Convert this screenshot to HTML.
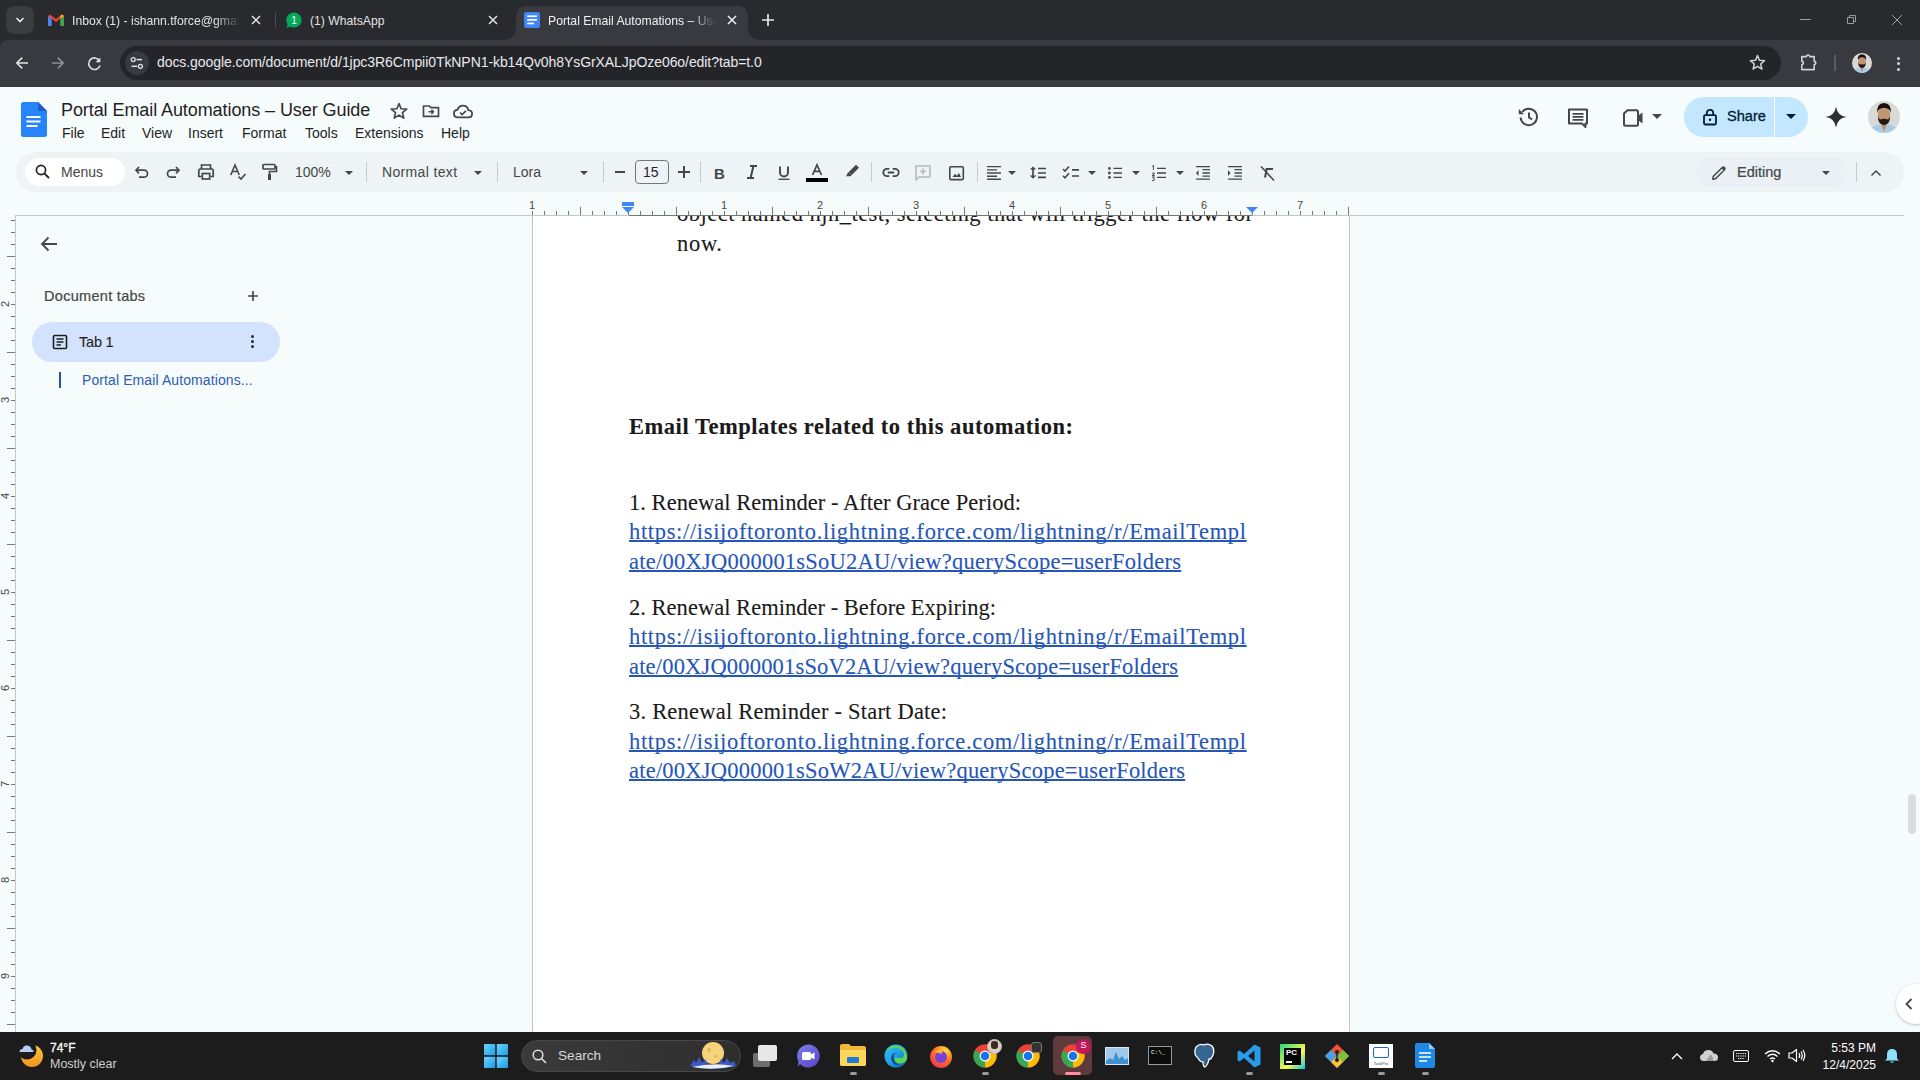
<!DOCTYPE html>
<html><head><meta charset="utf-8">
<style>
*{margin:0;padding:0;box-sizing:border-box}
html,body{width:1920px;height:1080px;overflow:hidden;background:#f6fbfc;font-family:"Liberation Sans",sans-serif;position:relative}
.abs{position:absolute}
svg{position:absolute;overflow:visible}
/* chrome */
#tabstrip{left:0;top:0;width:1920px;height:50px;background:#282a2e}
#toolbar{left:0;top:40px;width:1920px;height:47px;background:#383a3f;border-top-left-radius:8px}
#omni{left:120px;top:46px;width:1661px;height:34px;border-radius:17px;background:#232529}
.tabtxt{font-size:12.2px;color:#e3e3e3;white-space:nowrap;top:14px}
/* docs */
#tb{left:16px;top:152px;width:1888px;height:40px;border-radius:20px;background:#eef3f6}
.menu{font-size:14px;color:#1f1f1f;top:125px}
.ic{stroke:#444746;fill:none;stroke-width:2}
.tbt{font-size:14px;color:#444746;top:164px}
.sep{position:absolute;top:162px;width:1px;height:20px;background:#c7c7c7}
#page{left:532px;top:215px;width:817px;height:830px;background:#fff;border-left:1px solid #c7c7c7;border-right:1px solid #c7c7c7}
.doc{font-family:"Liberation Serif",serif;font-size:22.5px;line-height:30px;color:#1a1a1a;-webkit-text-stroke:0.1px currentColor;white-space:nowrap;position:absolute}
.lnk{color:#2556b8;text-decoration:underline;text-decoration-thickness:2px;text-underline-offset:1px;text-decoration-skip-ink:none}
.rnum{position:absolute;width:20px;text-align:center;font-size:11px;color:#444746}
.vnum{transform:rotate(-90deg)}
#taskbar{left:0;top:1032px;width:1920px;height:48px;background:#1c1c1c}
</style></head><body>
<svg width="0" height="0" style="position:absolute"><defs><symbol id="av" viewBox="0 0 32 32"><clipPath id="avc"><circle cx="16" cy="16" r="16"/></clipPath><g clip-path="url(#avc)"><rect width="32" height="32" fill="#d9d9d7"/><path d="M3 27 Q9 23 13 23.5 L16 32 L19 23.5 Q23 23 29 27 V32 H3Z" fill="#a8cce6"/><path d="M12.5 21 H19.5 L16 31Z" fill="#b88b69"/><ellipse cx="16" cy="14" rx="6.2" ry="8.3" fill="#c29572"/><path d="M9.3 12 Q8.5 2 16 2 Q23.5 2 22.7 12 Q21.8 7 16 6.8 Q10.2 7 9.3 12Z" fill="#17120f"/><path d="M9.8 14.5 Q10 23.8 16 24 Q22 23.8 22.2 14.5 Q21 19 19 18.3 Q16 17.3 13 18.3 Q11 19 9.8 14.5Z" fill="#201813"/></g></symbol></defs></svg>
<!-- TAB STRIP -->
<div id="tabstrip" class="abs"></div>
<div class="abs" style="left:6px;top:6px;width:28px;height:28px;border-radius:8px;background:#3b3c3e"></div>
<svg style="left:14px;top:14px" width="12" height="12"><path d="M2.5 4 L6 7.5 L9.5 4" stroke="#e8eaed" stroke-width="1.6" fill="none"/></svg>
<!-- gmail tab -->
<svg style="left:48px;top:14px" width="16" height="12" viewBox="0 0 16 12"><path d="M0 2 V12 H3.5 V4.5 L8 8 L12.5 4.5 V12 H16 V2 L14 0.6 L8 5 L2 0.6 Z" fill="#ea4335"/><path d="M0 2 V12 H3.5 V4.5 L0 2Z" fill="#4285f4"/><path d="M16 2 V12 H12.5 V4.5Z" fill="#34a853"/><path d="M12.5 4.5 L16 2 L14 0.6 L12.5 1.7Z" fill="#fbbc04"/></svg>
<div class="abs tabtxt" style="left:72px;width:168px;overflow:hidden;-webkit-mask-image:linear-gradient(90deg,#000 85%,transparent);color:#e3e3e3">Inbox (1) - ishann.tforce@gmail.com</div>
<svg style="left:251px;top:15px" width="10" height="10"><path d="M1 1 L9 9 M9 1 L1 9" stroke="#e3e3e3" stroke-width="1.5"/></svg>
<div class="abs" style="left:275px;top:12px;width:1px;height:16px;background:#4a4c50"></div>
<!-- whatsapp tab -->
<svg style="left:286px;top:12px" width="16" height="17" viewBox="0 0 16 17"><path d="M8 0.5 A7.5 7.5 0 1 1 4.6 14.6 L0.5 16 L1.6 12.2 A7.5 7.5 0 0 1 8 0.5Z" fill="#00a859"/><text x="8" y="12" font-size="10" font-family="Liberation Sans" fill="#fff" text-anchor="middle">1</text></svg>
<div class="abs tabtxt" style="left:310px;color:#e3e3e3">(1) WhatsApp</div>
<svg style="left:488px;top:15px" width="10" height="10"><path d="M1 1 L9 9 M9 1 L1 9" stroke="#e3e3e3" stroke-width="1.5"/></svg>
<!-- active tab -->
<svg style="left:502px;top:6px" width="262" height="34" viewBox="0 0 262 34"><path d="M0 34 Q14 34 14 20 V10 Q14 0 24 0 H236 Q246 0 246 10 V20 Q246 34 260 34 Z" fill="#383a3f"/></svg>
<svg style="left:524px;top:12px" width="16" height="16" viewBox="0 0 16 16"><rect x="0" y="0" width="16" height="16" rx="2.2" fill="#4285f4"/><rect x="3.2" y="3.4" width="9.8" height="1.7" fill="#fff"/><rect x="3.2" y="7" width="9.8" height="1.7" fill="#fff"/><rect x="3.2" y="10.6" width="6.8" height="1.7" fill="#fff"/></svg>
<div class="abs tabtxt" style="left:548px;width:168px;overflow:hidden;-webkit-mask-image:linear-gradient(90deg,#000 85%,transparent);color:#f2f2f2">Portal Email Automations – User Guide</div>
<svg style="left:727px;top:15px" width="10" height="10"><path d="M1 1 L9 9 M9 1 L1 9" stroke="#f2f2f2" stroke-width="1.5"/></svg>
<svg style="left:761px;top:13px" width="14" height="14"><path d="M7 1 V13 M1 7 H13" stroke="#e8eaed" stroke-width="1.7"/></svg>
<!-- window controls -->
<div class="abs" style="left:1800px;top:19px;width:11px;height:1px;background:#9a9b9d"></div>
<svg style="left:1845px;top:14px" width="12" height="12"><path d="M2.5 3.5 H8.5 V9.5 H2.5Z M4.5 3.5 V1.5 H10.5 V7.5 H8.5" stroke="#9a9b9d" stroke-width="1" fill="none"/></svg>
<svg style="left:1891px;top:14px" width="12" height="12"><path d="M1 1 L11 11 M11 1 L1 11" stroke="#a0a1a3" stroke-width="1"/></svg>
<!-- TOOLBAR -->
<div id="toolbar" class="abs"></div>
<svg style="left:15px;top:56px" width="14" height="14" viewBox="0 0 14 14"><path d="M13 7 H2 M7.2 1.6 L1.8 7 L7.2 12.4" stroke="#e3e3e3" stroke-width="1.6" fill="none"/></svg>
<svg style="left:51px;top:56px" width="14" height="14" viewBox="0 0 14 14"><path d="M1 7 H12 M6.8 1.6 L12.2 7 L6.8 12.4" stroke="#8e9093" stroke-width="1.6" fill="none"/></svg>
<svg style="left:87px;top:56px" width="16" height="16" viewBox="0 0 16 16"><path d="M12.4 4.6 A5.8 5.8 0 1 0 13 9.5" stroke="#e3e3e3" stroke-width="1.6" fill="none"/><path d="M13.3 1.4 V6.2 H8.5Z" fill="#e3e3e3"/></svg>
<div id="omni" class="abs"></div>
<div class="abs" style="left:125px;top:51px;width:24px;height:24px;border-radius:12px;background:#383a3f"></div>
<svg style="left:130px;top:56px" width="14" height="14" viewBox="0 0 14 14"><circle cx="3.2" cy="3.6" r="2" stroke="#e3e3e3" stroke-width="1.3" fill="none"/><path d="M6.5 3.6 H12" stroke="#e3e3e3" stroke-width="1.5"/><circle cx="10.4" cy="10.3" r="2" stroke="#e3e3e3" stroke-width="1.3" fill="none"/><path d="M1.5 10.3 H7.2" stroke="#e3e3e3" stroke-width="1.5"/></svg>
<div class="abs" style="left:157px;top:54px;font-size:14px;letter-spacing:-0.07px;color:#e8eaed;white-space:nowrap">docs.google.com/document/d/1jpc3R6Cmpii0TkNPN1-kb14Qv0h8YsGrXALJpOze06o/edit?tab=t.0</div>
<svg style="left:1748px;top:53px" width="19" height="19" viewBox="0 0 24 24"><path d="M12 3.2 L14.5 9.3 L21 9.7 L16 13.9 L17.6 20.3 L12 16.8 L6.4 20.3 L8 13.9 L3 9.7 L9.5 9.3Z" stroke="#d0d2d4" stroke-width="1.9" fill="none" stroke-linejoin="round"/></svg>
<svg style="left:1799px;top:53px" width="20" height="20" viewBox="0 0 20 20"><path d="M2.8 3.6 H7.5 A1.6 1.6 0 0 1 10.7 3.6 H15.2 V8.4 A1.6 1.6 0 0 1 15.2 11.6 V16.6 H2.8 V11.6 A1.6 1.6 0 0 0 2.8 8.4 Z" stroke="#d0d2d4" stroke-width="1.6" fill="none" stroke-linejoin="round"/></svg>
<div class="abs" style="left:1834px;top:55px;width:1.5px;height:16px;background:#5a5d62"></div>
<svg style="left:1852px;top:53px" width="20" height="20"><use href="#av"/></svg>
<div class="abs" style="left:1896.5px;top:56.5px;width:3px;height:3px;border-radius:2px;background:#d6d8da"></div>
<div class="abs" style="left:1896.5px;top:62px;width:3px;height:3px;border-radius:2px;background:#d6d8da"></div>
<div class="abs" style="left:1896.5px;top:67.5px;width:3px;height:3px;border-radius:2px;background:#d6d8da"></div>
<!-- DOCS HEADER -->
<svg style="left:21px;top:102px" width="26" height="35" viewBox="0 0 26 35"><path d="M2.5 0 H17 L26 9 V32.5 Q26 35 23.5 35 H2.5 Q0 35 0 32.5 V2.5 Q0 0 2.5 0Z" fill="#2684fc"/><path d="M17 0 L26 9 H17Z" fill="#1a5fd0"/><rect x="5.5" y="14" width="14" height="2" fill="#fff"/><rect x="5.5" y="18.5" width="14" height="2" fill="#fff"/><rect x="5.5" y="23" width="11" height="2" fill="#fff"/></svg>
<div class="abs" style="left:61px;top:100px;font-size:18px;letter-spacing:-0.08px;color:#1f1f1f;white-space:nowrap">Portal Email Automations – User Guide</div>
<svg style="left:389px;top:101px" width="20" height="20" viewBox="0 0 24 24"><path d="M12 3 L14.5 9.3 L21.3 9.7 L16.1 14 L17.8 20.6 L12 16.9 L6.2 20.6 L7.9 14 L2.7 9.7 L9.5 9.3Z" stroke="#444746" stroke-width="2" fill="none" stroke-linejoin="round"/></svg>
<svg style="left:421px;top:101px" width="20" height="20" viewBox="0 0 24 24"><path d="M3 6 V18.5 H21 V8 H12 L10 6Z" stroke="#444746" stroke-width="2" fill="none" stroke-linejoin="round"/><path d="M9 13 H15 M12.5 10.5 L15 13 L12.5 15.5" stroke="#444746" stroke-width="1.8" fill="none"/></svg>
<svg style="left:452px;top:101px" width="22" height="20" viewBox="0 0 24 22"><path d="M6.5 18 Q2 18 2 13.8 Q2 10 6 9.6 Q7.3 5 12 5 Q17 5 17.8 10 Q22 10.3 22 14 Q22 18 18 18Z" stroke="#444746" stroke-width="2" fill="none"/><path d="M8.8 12.8 L11 15 L15.2 10.8" stroke="#444746" stroke-width="1.8" fill="none"/></svg>
<div class="abs menu" style="left:62px">File</div>
<div class="abs menu" style="left:101px">Edit</div>
<div class="abs menu" style="left:142px">View</div>
<div class="abs menu" style="left:188px">Insert</div>
<div class="abs menu" style="left:242px">Format</div>
<div class="abs menu" style="left:305px">Tools</div>
<div class="abs menu" style="left:355px">Extensions</div>
<div class="abs menu" style="left:441px">Help</div>
<!-- right header -->
<svg style="left:1517px;top:106px" width="23" height="22" viewBox="0 0 23 22"><path d="M5.2 6 A8.2 8.2 0 1 1 3.6 11.5" stroke="#444746" stroke-width="2" fill="none"/><path d="M1.8 3 V8.2 H7Z" fill="#444746"/><path d="M12 6.5 V11.5 L15.2 13.5" stroke="#444746" stroke-width="2" fill="none"/></svg>
<svg style="left:1566px;top:106px" width="24" height="24" viewBox="0 0 24 24"><path d="M3 3.5 H21 V17.5 H19.5 V21 L16 17.5 H3Z" stroke="#444746" stroke-width="2" fill="none" stroke-linejoin="round"/><path d="M6.5 7.8 H17.5 M6.5 10.8 H17.5 M6.5 13.8 H17.5" stroke="#444746" stroke-width="1.7"/></svg>
<svg style="left:1621px;top:108px" width="24" height="20" viewBox="0 0 24 20"><path d="M4 4.5 L6.5 2.2 H15.5 Q17 2.2 17 3.7 V16.3 Q17 17.8 15.5 17.8 H4.5 Q3 17.8 3 16.3 V5.5Z" stroke="#444746" stroke-width="2" fill="none" stroke-linejoin="round"/><path d="M17.5 7.5 L21.5 4.5 V15.5 L17.5 12.5Z" fill="#444746"/></svg>
<svg style="left:1652px;top:114px" width="10" height="6"><path d="M0 0 H10 L5 5Z" fill="#444746"/></svg>
<div class="abs" style="left:1684px;top:97px;width:124px;height:40px;border-radius:20px;background:#c2e7ff"></div>
<div class="abs" style="left:1774px;top:97px;width:1px;height:40px;background:#f9fbfd"></div>
<svg style="left:1702px;top:108px" width="16" height="18" viewBox="0 0 16 18"><rect x="2" y="7.2" width="12" height="9.3" rx="1.2" stroke="#001d35" stroke-width="1.8" fill="none"/><path d="M4.8 7.2 V5 A3.2 3.2 0 0 1 11.2 5 V7.2" stroke="#001d35" stroke-width="1.8" fill="none"/><circle cx="8" cy="11.8" r="1.3" fill="#001d35"/></svg>
<div class="abs" style="left:1727px;top:108px;font-size:14.6px;color:#001d35;white-space:nowrap;-webkit-text-stroke:0.3px #001d35">Share</div>
<svg style="left:1786px;top:114px" width="10" height="6"><path d="M0 0 H10 L5 5Z" fill="#001d35"/></svg>
<svg style="left:1825px;top:106px" width="22" height="22" viewBox="0 0 22 22"><path d="M11 0.5 Q12.2 9.8 21.5 11 Q12.2 12.2 11 21.5 Q9.8 12.2 0.5 11 Q9.8 9.8 11 0.5Z" fill="#2d2f31"/></svg>
<svg style="left:1868px;top:101px" width="32" height="32"><use href="#av"/></svg>
<!-- TOOLBAR ROW -->
<div id="tb" class="abs"></div>
<div class="abs" style="left:25px;top:158px;width:100px;height:28px;border-radius:14px;background:#fff"></div>
<svg style="left:35px;top:164px" width="16" height="16" viewBox="0 0 16 16"><circle cx="6" cy="6" r="4.6" stroke="#1f1f1f" stroke-width="1.7" fill="none"/><path d="M9.3 9.3 L14 14" stroke="#1f1f1f" stroke-width="1.8"/></svg>
<div class="abs tbt" style="left:61px;top:164px">Menus</div>
<!-- toolbar icons -->
<svg style="left:134px;top:164px" width="16" height="16" viewBox="0 0 16 16"><path d="M5 3 L2 6.2 L5 9.4" stroke="#444746" stroke-width="1.7" fill="none"/><path d="M2.5 6.2 H10 A3.5 3.5 0 0 1 10 13.2 H5" stroke="#444746" stroke-width="1.7" fill="none"/></svg>
<svg style="left:165px;top:164px" width="16" height="16" viewBox="0 0 16 16"><path d="M11 3 L14 6.2 L11 9.4" stroke="#444746" stroke-width="1.7" fill="none"/><path d="M13.5 6.2 H6 A3.5 3.5 0 0 0 6 13.2 H11" stroke="#444746" stroke-width="1.7" fill="none"/></svg>
<svg style="left:197px;top:163px" width="18" height="18" viewBox="0 0 18 18"><path d="M4.5 6 V2 H13.5 V6" stroke="#444746" stroke-width="1.7" fill="none"/><path d="M4.5 13.5 H1.8 V7.5 Q1.8 6 3.3 6 H14.7 Q16.2 6 16.2 7.5 V13.5 H13.5" stroke="#444746" stroke-width="1.7" fill="none"/><rect x="5.3" y="10.5" width="7.4" height="5.5" stroke="#444746" stroke-width="1.7" fill="none"/></svg>
<svg style="left:229px;top:163px" width="18" height="18" viewBox="0 0 18 18"><path d="M1.8 12 L6 2 L10.2 12 M3.3 8.5 H8.7" stroke="#444746" stroke-width="1.6" fill="none"/><path d="M9.5 13.5 L12 16 L16.5 11" stroke="#444746" stroke-width="1.6" fill="none"/></svg>
<svg style="left:261px;top:163px" width="17" height="18" viewBox="0 0 17 18"><rect x="2" y="1.5" width="12" height="4.5" rx="0.8" stroke="#444746" stroke-width="1.7" fill="none"/><path d="M14 3.8 H15.5 V8.5 H8.5 V11" stroke="#444746" stroke-width="1.6" fill="none"/><rect x="7" y="11" width="3" height="6" rx="0.5" fill="#444746"/></svg>
<div class="abs tbt" style="left:295px">100%</div>
<svg style="left:345px;top:171px" width="8" height="4"><path d="M0 0 H8 L4 4Z" fill="#444746"/></svg>
<div class="sep" style="left:366px"></div>
<div class="abs tbt" style="left:382px;letter-spacing:0.35px">Normal text</div>
<svg style="left:474px;top:171px" width="8" height="4"><path d="M0 0 H8 L4 4Z" fill="#444746"/></svg>
<div class="sep" style="left:497px"></div>
<div class="abs tbt" style="left:513px">Lora</div>
<svg style="left:580px;top:171px" width="8" height="4"><path d="M0 0 H8 L4 4Z" fill="#444746"/></svg>
<div class="sep" style="left:603px"></div>
<div class="abs" style="left:615px;top:171px;width:10px;height:2px;background:#444746"></div>
<div class="abs" style="left:635px;top:160px;width:34px;height:24px;border:1px solid #747775;border-radius:4px"></div>
<div class="abs tbt" style="left:643px;top:164px;color:#1f1f1f">15</div>
<svg style="left:678px;top:166px" width="12" height="12"><path d="M6 0 V12 M0 6 H12" stroke="#444746" stroke-width="2"/></svg>
<div class="sep" style="left:700px"></div>
<div class="abs" style="left:714px;top:164.5px;font-size:15px;font-weight:bold;color:#444746">B</div>
<svg style="left:744px;top:164px" width="16" height="16" viewBox="0 0 16 16"><path d="M6 2 H13 M3 14 H10 M9.5 2 L6.5 14" stroke="#444746" stroke-width="2" fill="none"/></svg>
<svg style="left:776px;top:165px" width="16" height="16" viewBox="0 0 16 16"><path d="M4 1.5 V7.5 A4 4 0 0 0 12 7.5 V1.5" stroke="#444746" stroke-width="1.9" fill="none"/><path d="M2.5 14.3 H13.5" stroke="#444746" stroke-width="1.4"/></svg>
<svg style="left:808px;top:163px" width="18" height="14" viewBox="0 0 18 14"><path d="M4.5 12 L9 1.8 L13.5 12 M6.2 8.3 H11.8" stroke="#444746" stroke-width="1.7" fill="none"/></svg>
<div class="abs" style="left:806px;top:178px;width:22px;height:4px;background:#000"></div>
<svg style="left:843px;top:162px" width="18" height="18" viewBox="0 0 18 18"><path d="M13 2.8 L16 5.8 L9 12.8 L6 9.8Z" fill="#444746"/><path d="M6 9.8 L9 12.8 L7.5 14.3 L3 14.3 L3.6 13.3 L4.5 11.3Z" fill="#444746"/></svg>
<div class="sep" style="left:871px"></div>
<svg style="left:882px;top:167px" width="18" height="11" viewBox="0 0 18 11"><path d="M7.3 1.8 H5 A3.7 3.7 0 0 0 5 9.2 H7.3 M10.7 1.8 H13 A3.7 3.7 0 0 1 13 9.2 H10.7 M5.8 5.5 H12.2" stroke="#444746" stroke-width="1.8" fill="none"/></svg>
<svg style="left:914px;top:164px" width="18" height="18" viewBox="0 0 18 18"><path d="M2 2 H16 V13 H5 L2 16Z" stroke="#b7b9bb" stroke-width="1.6" fill="none" stroke-linejoin="round"/><path d="M9 4.5 V10.5 M6 7.5 H12" stroke="#b7b9bb" stroke-width="1.6"/></svg>
<svg style="left:948px;top:165px" width="17" height="16" viewBox="0 0 17 16"><rect x="1.8" y="1.8" width="13.5" height="12.8" rx="1" stroke="#444746" stroke-width="1.6" fill="none"/><path d="M4.5 12 L7 8.8 L8.8 10.8 L11 8 L13 12Z" fill="#444746"/></svg>
<div class="sep" style="left:977px"></div>
<svg style="left:986px;top:165px" width="16" height="16" viewBox="0 0 16 16"><path d="M1 1.6 H15 M1 4.9 H11 M1 8 H15 M1 11.2 H11 M1 14.2 H15" stroke="#444746" stroke-width="1.4"/></svg>
<svg style="left:1008px;top:171px" width="8" height="4"><path d="M0 0 H8 L4 4Z" fill="#444746"/></svg>
<svg style="left:1029px;top:164px" width="18" height="17" viewBox="0 0 18 17"><path d="M4 4 V12" stroke="#444746" stroke-width="1.7"/><path d="M0.8 5.5 L4 2.5 L7.2 5.5Z M0.8 11.5 L4 14.7 L7.2 11.5Z" fill="#444746"/><path d="M9 4.5 H17 M9 9 H17 M9 13.3 H17" stroke="#444746" stroke-width="1.7"/></svg>
<svg style="left:1061px;top:164px" width="20" height="17" viewBox="0 0 20 17"><path d="M2 5 L4 7 L8 2.5 M2 11.8 L4 13.8 L8 9.3" stroke="#444746" stroke-width="1.6" fill="none"/><path d="M11 5.8 H18 M11 12 H18" stroke="#444746" stroke-width="1.7"/></svg>
<svg style="left:1088px;top:171px" width="8" height="4"><path d="M0 0 H8 L4 4Z" fill="#444746"/></svg>
<svg style="left:1107px;top:164px" width="18" height="16" viewBox="0 0 18 16"><circle cx="2.4" cy="4.4" r="1.4" fill="#444746"/><circle cx="2.4" cy="9" r="1.4" fill="#444746"/><circle cx="2.4" cy="13.4" r="1.4" fill="#444746"/><path d="M6.5 4.4 H15 M6.5 9 H15 M6.5 13.4 H15" stroke="#444746" stroke-width="1.4"/></svg>
<svg style="left:1132px;top:171px" width="8" height="4"><path d="M0 0 H8 L4 4Z" fill="#444746"/></svg>
<svg style="left:1151px;top:164px" width="18" height="17" viewBox="0 0 18 17"><path d="M1.2 2.2 L2.4 1.5 V6 M1 9.6 Q2.8 8.2 3.6 9.3 Q3.8 10.2 1 11.6 H3.8 M1 13 H3.6 L2.2 14.6 Q3.8 14.8 3.6 16 Q3 17 1 16.4" stroke="#444746" stroke-width="1" fill="none"/><path d="M6 4.4 H15 M6 9 H15 M6 13.4 H15" stroke="#444746" stroke-width="1.4"/></svg>
<svg style="left:1176px;top:171px" width="8" height="4"><path d="M0 0 H8 L4 4Z" fill="#444746"/></svg>
<svg style="left:1194px;top:164px" width="17" height="17" viewBox="0 0 17 17"><path d="M2 2.7 H16 M8.5 5.7 H16 M8.5 9 H16 M8.5 12.2 H16 M2 15.2 H16" stroke="#444746" stroke-width="1.3"/><path d="M4.5 6 V12 L2 9Z" fill="#444746"/></svg>
<svg style="left:1227px;top:164px" width="17" height="17" viewBox="0 0 17 17"><path d="M1 2.7 H15 M7.5 5.7 H15 M7.5 9 H15 M7.5 12.2 H15 M1 15.2 H15" stroke="#444746" stroke-width="1.3"/><path d="M1 6 V12 L3.5 9Z" fill="#444746"/></svg>
<svg style="left:1257px;top:164px" width="18" height="17" viewBox="0 0 18 17"><path d="M8.5 4.9 H16 M9.7 5 L8 13.5" stroke="#444746" stroke-width="2" fill="none"/><path d="M4 2.5 L17 16.5" stroke="#444746" stroke-width="1.5"/></svg>
<div class="abs" style="left:1696px;top:157px;width:151px;height:30px;border-radius:15px;background:#eaf0f5"></div>
<svg style="left:1711px;top:165px" width="16" height="16" viewBox="0 0 16 16"><path d="M1.8 14.2 L2.2 11.5 L11 2.7 L13.3 5 L4.5 13.8Z" stroke="#444746" stroke-width="1.5" fill="none" stroke-linejoin="round"/><path d="M11.5 1.5 Q12.4 0.8 13.3 1.6 L14.4 2.7 Q15.2 3.6 14.5 4.5 L13.6 5.3 L10.7 2.4Z" fill="#444746"/></svg>
<div class="abs tbt" style="left:1737px;color:#444746;font-size:14.5px;top:164px;-webkit-text-stroke:0.2px #444746">Editing</div>
<svg style="left:1822px;top:171px" width="8" height="4"><path d="M0 0 H8 L4 4Z" fill="#444746"/></svg>
<div class="sep" style="left:1856px"></div>
<svg style="left:1870px;top:169px" width="12" height="8"><path d="M1.5 6.5 L6 2 L10.5 6.5" stroke="#444746" stroke-width="1.5" fill="none"/></svg>
<!-- RULERS -->
<div class="abs" style="left:15px;top:215px;width:1889px;height:1px;background:#c4c7c5"></div>
<div class="abs" style="left:629px;top:215px;width:623px;height:1px;background:#747775"></div>
<div class="abs" style="left:15px;top:215px;width:1px;height:817px;background:#c4c7c5"></div>
<div class="abs" style="left:532px;top:211px;width:1px;height:4px;background:#747775"></div>
<div class="abs" style="left:544px;top:211px;width:1px;height:4px;background:#747775"></div>
<div class="abs" style="left:556px;top:211px;width:1px;height:4px;background:#747775"></div>
<div class="abs" style="left:568px;top:211px;width:1px;height:4px;background:#747775"></div>
<div class="abs" style="left:580px;top:207px;width:1px;height:8px;background:#747775"></div>
<div class="abs" style="left:592px;top:211px;width:1px;height:4px;background:#747775"></div>
<div class="abs" style="left:604px;top:211px;width:1px;height:4px;background:#747775"></div>
<div class="abs" style="left:616px;top:211px;width:1px;height:4px;background:#747775"></div>
<div class="abs" style="left:628px;top:211px;width:1px;height:4px;background:#747775"></div>
<div class="abs" style="left:640px;top:211px;width:1px;height:4px;background:#747775"></div>
<div class="abs" style="left:652px;top:211px;width:1px;height:4px;background:#747775"></div>
<div class="abs" style="left:664px;top:211px;width:1px;height:4px;background:#747775"></div>
<div class="abs" style="left:676px;top:207px;width:1px;height:8px;background:#747775"></div>
<div class="abs" style="left:688px;top:211px;width:1px;height:4px;background:#747775"></div>
<div class="abs" style="left:700px;top:211px;width:1px;height:4px;background:#747775"></div>
<div class="abs" style="left:712px;top:211px;width:1px;height:4px;background:#747775"></div>
<div class="abs" style="left:724px;top:211px;width:1px;height:4px;background:#747775"></div>
<div class="abs" style="left:736px;top:211px;width:1px;height:4px;background:#747775"></div>
<div class="abs" style="left:748px;top:211px;width:1px;height:4px;background:#747775"></div>
<div class="abs" style="left:760px;top:211px;width:1px;height:4px;background:#747775"></div>
<div class="abs" style="left:772px;top:207px;width:1px;height:8px;background:#747775"></div>
<div class="abs" style="left:784px;top:211px;width:1px;height:4px;background:#747775"></div>
<div class="abs" style="left:796px;top:211px;width:1px;height:4px;background:#747775"></div>
<div class="abs" style="left:808px;top:211px;width:1px;height:4px;background:#747775"></div>
<div class="abs" style="left:820px;top:211px;width:1px;height:4px;background:#747775"></div>
<div class="abs" style="left:832px;top:211px;width:1px;height:4px;background:#747775"></div>
<div class="abs" style="left:844px;top:211px;width:1px;height:4px;background:#747775"></div>
<div class="abs" style="left:856px;top:211px;width:1px;height:4px;background:#747775"></div>
<div class="abs" style="left:868px;top:207px;width:1px;height:8px;background:#747775"></div>
<div class="abs" style="left:880px;top:211px;width:1px;height:4px;background:#747775"></div>
<div class="abs" style="left:892px;top:211px;width:1px;height:4px;background:#747775"></div>
<div class="abs" style="left:904px;top:211px;width:1px;height:4px;background:#747775"></div>
<div class="abs" style="left:916px;top:211px;width:1px;height:4px;background:#747775"></div>
<div class="abs" style="left:928px;top:211px;width:1px;height:4px;background:#747775"></div>
<div class="abs" style="left:940px;top:211px;width:1px;height:4px;background:#747775"></div>
<div class="abs" style="left:952px;top:211px;width:1px;height:4px;background:#747775"></div>
<div class="abs" style="left:964px;top:207px;width:1px;height:8px;background:#747775"></div>
<div class="abs" style="left:976px;top:211px;width:1px;height:4px;background:#747775"></div>
<div class="abs" style="left:988px;top:211px;width:1px;height:4px;background:#747775"></div>
<div class="abs" style="left:1000px;top:211px;width:1px;height:4px;background:#747775"></div>
<div class="abs" style="left:1012px;top:211px;width:1px;height:4px;background:#747775"></div>
<div class="abs" style="left:1024px;top:211px;width:1px;height:4px;background:#747775"></div>
<div class="abs" style="left:1036px;top:211px;width:1px;height:4px;background:#747775"></div>
<div class="abs" style="left:1048px;top:211px;width:1px;height:4px;background:#747775"></div>
<div class="abs" style="left:1060px;top:207px;width:1px;height:8px;background:#747775"></div>
<div class="abs" style="left:1072px;top:211px;width:1px;height:4px;background:#747775"></div>
<div class="abs" style="left:1084px;top:211px;width:1px;height:4px;background:#747775"></div>
<div class="abs" style="left:1096px;top:211px;width:1px;height:4px;background:#747775"></div>
<div class="abs" style="left:1108px;top:211px;width:1px;height:4px;background:#747775"></div>
<div class="abs" style="left:1120px;top:211px;width:1px;height:4px;background:#747775"></div>
<div class="abs" style="left:1132px;top:211px;width:1px;height:4px;background:#747775"></div>
<div class="abs" style="left:1144px;top:211px;width:1px;height:4px;background:#747775"></div>
<div class="abs" style="left:1156px;top:207px;width:1px;height:8px;background:#747775"></div>
<div class="abs" style="left:1168px;top:211px;width:1px;height:4px;background:#747775"></div>
<div class="abs" style="left:1180px;top:211px;width:1px;height:4px;background:#747775"></div>
<div class="abs" style="left:1192px;top:211px;width:1px;height:4px;background:#747775"></div>
<div class="abs" style="left:1204px;top:211px;width:1px;height:4px;background:#747775"></div>
<div class="abs" style="left:1216px;top:211px;width:1px;height:4px;background:#747775"></div>
<div class="abs" style="left:1228px;top:211px;width:1px;height:4px;background:#747775"></div>
<div class="abs" style="left:1240px;top:211px;width:1px;height:4px;background:#747775"></div>
<div class="abs" style="left:1252px;top:207px;width:1px;height:8px;background:#747775"></div>
<div class="abs" style="left:1264px;top:211px;width:1px;height:4px;background:#747775"></div>
<div class="abs" style="left:1276px;top:211px;width:1px;height:4px;background:#747775"></div>
<div class="abs" style="left:1288px;top:211px;width:1px;height:4px;background:#747775"></div>
<div class="abs" style="left:1300px;top:211px;width:1px;height:4px;background:#747775"></div>
<div class="abs" style="left:1312px;top:211px;width:1px;height:4px;background:#747775"></div>
<div class="abs" style="left:1324px;top:211px;width:1px;height:4px;background:#747775"></div>
<div class="abs" style="left:1336px;top:211px;width:1px;height:4px;background:#747775"></div>
<div class="abs" style="left:1348px;top:207px;width:1px;height:8px;background:#747775"></div>
<div class="abs rnum" style="left:522px;top:199px">1</div>
<div class="abs rnum" style="left:714px;top:199px">1</div>
<div class="abs rnum" style="left:810px;top:199px">2</div>
<div class="abs rnum" style="left:906px;top:199px">3</div>
<div class="abs rnum" style="left:1002px;top:199px">4</div>
<div class="abs rnum" style="left:1098px;top:199px">5</div>
<div class="abs rnum" style="left:1194px;top:199px">6</div>
<div class="abs rnum" style="left:1290px;top:199px">7</div>
<div class="abs" style="left:622px;top:202px;width:12px;height:4px;background:#4285f4"></div>
<svg style="left:622px;top:207px" width="12" height="6"><path d="M0 0 H12 L6 6Z" fill="#4285f4"/></svg>
<svg style="left:1246px;top:207px" width="12" height="6"><path d="M0 0 H12 L6 6Z" fill="#4285f4"/></svg>
<div class="abs" style="left:11px;top:220px;width:4px;height:1px;background:#747775"></div>
<div class="abs" style="left:11px;top:232px;width:4px;height:1px;background:#747775"></div>
<div class="abs" style="left:11px;top:244px;width:4px;height:1px;background:#747775"></div>
<div class="abs" style="left:7px;top:256px;width:8px;height:1px;background:#747775"></div>
<div class="abs" style="left:11px;top:268px;width:4px;height:1px;background:#747775"></div>
<div class="abs" style="left:11px;top:280px;width:4px;height:1px;background:#747775"></div>
<div class="abs" style="left:11px;top:292px;width:4px;height:1px;background:#747775"></div>
<div class="abs" style="left:11px;top:304px;width:4px;height:1px;background:#747775"></div>
<div class="abs" style="left:11px;top:316px;width:4px;height:1px;background:#747775"></div>
<div class="abs" style="left:11px;top:328px;width:4px;height:1px;background:#747775"></div>
<div class="abs" style="left:11px;top:340px;width:4px;height:1px;background:#747775"></div>
<div class="abs" style="left:7px;top:352px;width:8px;height:1px;background:#747775"></div>
<div class="abs" style="left:11px;top:364px;width:4px;height:1px;background:#747775"></div>
<div class="abs" style="left:11px;top:376px;width:4px;height:1px;background:#747775"></div>
<div class="abs" style="left:11px;top:388px;width:4px;height:1px;background:#747775"></div>
<div class="abs" style="left:11px;top:400px;width:4px;height:1px;background:#747775"></div>
<div class="abs" style="left:11px;top:412px;width:4px;height:1px;background:#747775"></div>
<div class="abs" style="left:11px;top:424px;width:4px;height:1px;background:#747775"></div>
<div class="abs" style="left:11px;top:436px;width:4px;height:1px;background:#747775"></div>
<div class="abs" style="left:7px;top:448px;width:8px;height:1px;background:#747775"></div>
<div class="abs" style="left:11px;top:460px;width:4px;height:1px;background:#747775"></div>
<div class="abs" style="left:11px;top:472px;width:4px;height:1px;background:#747775"></div>
<div class="abs" style="left:11px;top:484px;width:4px;height:1px;background:#747775"></div>
<div class="abs" style="left:11px;top:496px;width:4px;height:1px;background:#747775"></div>
<div class="abs" style="left:11px;top:508px;width:4px;height:1px;background:#747775"></div>
<div class="abs" style="left:11px;top:520px;width:4px;height:1px;background:#747775"></div>
<div class="abs" style="left:11px;top:532px;width:4px;height:1px;background:#747775"></div>
<div class="abs" style="left:7px;top:544px;width:8px;height:1px;background:#747775"></div>
<div class="abs" style="left:11px;top:556px;width:4px;height:1px;background:#747775"></div>
<div class="abs" style="left:11px;top:568px;width:4px;height:1px;background:#747775"></div>
<div class="abs" style="left:11px;top:580px;width:4px;height:1px;background:#747775"></div>
<div class="abs" style="left:11px;top:592px;width:4px;height:1px;background:#747775"></div>
<div class="abs" style="left:11px;top:604px;width:4px;height:1px;background:#747775"></div>
<div class="abs" style="left:11px;top:616px;width:4px;height:1px;background:#747775"></div>
<div class="abs" style="left:11px;top:628px;width:4px;height:1px;background:#747775"></div>
<div class="abs" style="left:7px;top:640px;width:8px;height:1px;background:#747775"></div>
<div class="abs" style="left:11px;top:652px;width:4px;height:1px;background:#747775"></div>
<div class="abs" style="left:11px;top:664px;width:4px;height:1px;background:#747775"></div>
<div class="abs" style="left:11px;top:676px;width:4px;height:1px;background:#747775"></div>
<div class="abs" style="left:11px;top:688px;width:4px;height:1px;background:#747775"></div>
<div class="abs" style="left:11px;top:700px;width:4px;height:1px;background:#747775"></div>
<div class="abs" style="left:11px;top:712px;width:4px;height:1px;background:#747775"></div>
<div class="abs" style="left:11px;top:724px;width:4px;height:1px;background:#747775"></div>
<div class="abs" style="left:7px;top:736px;width:8px;height:1px;background:#747775"></div>
<div class="abs" style="left:11px;top:748px;width:4px;height:1px;background:#747775"></div>
<div class="abs" style="left:11px;top:760px;width:4px;height:1px;background:#747775"></div>
<div class="abs" style="left:11px;top:772px;width:4px;height:1px;background:#747775"></div>
<div class="abs" style="left:11px;top:784px;width:4px;height:1px;background:#747775"></div>
<div class="abs" style="left:11px;top:796px;width:4px;height:1px;background:#747775"></div>
<div class="abs" style="left:11px;top:808px;width:4px;height:1px;background:#747775"></div>
<div class="abs" style="left:11px;top:820px;width:4px;height:1px;background:#747775"></div>
<div class="abs" style="left:7px;top:832px;width:8px;height:1px;background:#747775"></div>
<div class="abs" style="left:11px;top:844px;width:4px;height:1px;background:#747775"></div>
<div class="abs" style="left:11px;top:856px;width:4px;height:1px;background:#747775"></div>
<div class="abs" style="left:11px;top:868px;width:4px;height:1px;background:#747775"></div>
<div class="abs" style="left:11px;top:880px;width:4px;height:1px;background:#747775"></div>
<div class="abs" style="left:11px;top:892px;width:4px;height:1px;background:#747775"></div>
<div class="abs" style="left:11px;top:904px;width:4px;height:1px;background:#747775"></div>
<div class="abs" style="left:11px;top:916px;width:4px;height:1px;background:#747775"></div>
<div class="abs" style="left:7px;top:928px;width:8px;height:1px;background:#747775"></div>
<div class="abs" style="left:11px;top:940px;width:4px;height:1px;background:#747775"></div>
<div class="abs" style="left:11px;top:952px;width:4px;height:1px;background:#747775"></div>
<div class="abs" style="left:11px;top:964px;width:4px;height:1px;background:#747775"></div>
<div class="abs" style="left:11px;top:976px;width:4px;height:1px;background:#747775"></div>
<div class="abs" style="left:11px;top:988px;width:4px;height:1px;background:#747775"></div>
<div class="abs" style="left:11px;top:1000px;width:4px;height:1px;background:#747775"></div>
<div class="abs" style="left:11px;top:1012px;width:4px;height:1px;background:#747775"></div>
<div class="abs" style="left:7px;top:1024px;width:8px;height:1px;background:#747775"></div>
<div class="abs rnum vnum" style="left:-5px;top:298px">2</div>
<div class="abs rnum vnum" style="left:-5px;top:394px">3</div>
<div class="abs rnum vnum" style="left:-5px;top:490px">4</div>
<div class="abs rnum vnum" style="left:-5px;top:586px">5</div>
<div class="abs rnum vnum" style="left:-5px;top:682px">6</div>
<div class="abs rnum vnum" style="left:-5px;top:778px">7</div>
<div class="abs rnum vnum" style="left:-5px;top:874px">8</div>
<div class="abs rnum vnum" style="left:-5px;top:970px">9</div>
<!-- PAGE -->
<div class="abs" style="left:532px;top:216px;width:818px;height:816px;background:#fff;border-left:1px solid #c4c7c5;border-right:1px solid #c4c7c5;overflow:hidden">
<div class="doc" style="left:144px;top:-17.0px;letter-spacing:0.482px">object named hjh_test, selecting that will trigger the flow for</div>
<div class="doc" style="left:144px;top:12.7px;letter-spacing:0.693px">now.</div>
<div class="doc" style="left:96px;top:196.3px;font-weight:bold;letter-spacing:0.536px">Email Templates related to this automation:</div>
<div class="doc" style="left:96px;top:272.3px;letter-spacing:0.038px">1. Renewal Reminder - After Grace Period:</div>
<div class="doc lnk" style="left:96px;top:301.0px;letter-spacing:0.663px">https://isijoftoronto.lightning.force.com/lightning/r/EmailTempl</div>
<div class="doc lnk" style="left:96px;top:331.4px;letter-spacing:0.242px">ate/00XJQ000001sSoU2AU/view?queryScope=userFolders</div>
<div class="doc" style="left:96px;top:377.0px;letter-spacing:0.023px">2. Renewal Reminder - Before Expiring:</div>
<div class="doc lnk" style="left:96px;top:405.6px;letter-spacing:0.663px">https://isijoftoronto.lightning.force.com/lightning/r/EmailTempl</div>
<div class="doc lnk" style="left:96px;top:435.7px;letter-spacing:0.181px">ate/00XJQ000001sSoV2AU/view?queryScope=userFolders</div>
<div class="doc" style="left:96px;top:481.0px;letter-spacing:0.214px">3. Renewal Reminder - Start Date:</div>
<div class="doc lnk" style="left:96px;top:510.7px;letter-spacing:0.663px">https://isijoftoronto.lightning.force.com/lightning/r/EmailTempl</div>
<div class="doc lnk" style="left:96px;top:539.9px;letter-spacing:0.222px">ate/00XJQ000001sSoW2AU/view?queryScope=userFolders</div>
</div>
<!-- SIDEBAR -->
<svg style="left:40px;top:236px" width="18" height="16" viewBox="0 0 18 16"><path d="M17 8 H2.5 M8.5 1.5 L2 8 L8.5 14.5" stroke="#444746" stroke-width="1.8" fill="none"/></svg>
<div class="abs" style="left:44px;top:288px;font-size:14.5px;letter-spacing:0.3px;color:#444746;white-space:nowrap;-webkit-text-stroke:0.2px #444746">Document tabs</div>
<svg style="left:248px;top:291px" width="10" height="10"><path d="M5 0 V10 M0 5 H10" stroke="#444746" stroke-width="1.7"/></svg>
<div class="abs" style="left:32px;top:322px;width:248px;height:40px;border-radius:20px;background:#d3e3fd"></div>
<svg style="left:52px;top:334px" width="16" height="16" viewBox="0 0 16 16"><rect x="1.5" y="1.5" width="13" height="13" rx="1" stroke="#1f1f1f" stroke-width="1.6" fill="none"/><path d="M4.5 5 H11.5 M4.5 8 H11.5 M4.5 11 H9" stroke="#1f1f1f" stroke-width="1.4"/></svg>
<div class="abs" style="left:79px;top:334px;font-size:14.5px;letter-spacing:-0.2px;color:#1f1f1f;white-space:nowrap;-webkit-text-stroke:0.1px #1f1f1f">Tab 1</div>
<div class="abs" style="left:251px;top:335px;width:3px;height:3px;border-radius:2px;background:#2b2b2b"></div>
<div class="abs" style="left:251px;top:340px;width:3px;height:3px;border-radius:2px;background:#2b2b2b"></div>
<div class="abs" style="left:251px;top:345px;width:3px;height:3px;border-radius:2px;background:#2b2b2b"></div>
<div class="abs" style="left:59px;top:372px;width:2px;height:16px;background:#2b4fa6"></div>
<div class="abs" style="left:82px;top:372px;font-size:14px;letter-spacing:0.1px;color:#2e5bb5;white-space:nowrap">Portal Email Automations...</div>
<div class="abs" style="left:1908px;top:794px;width:8px;height:40px;border-radius:4px;background:#dadce0"></div>
<div class="abs" style="left:1896px;top:984px;width:40px;height:40px;border-radius:20px;background:#fff;box-shadow:0 1px 3px rgba(60,64,67,.3)"></div>
<svg style="left:1905px;top:998px" width="8" height="12"><path d="M6.5 1 L1.5 6 L6.5 11" stroke="#444746" stroke-width="1.8" fill="none"/></svg>
<!-- TASKBAR -->
<div id="taskbar" class="abs"></div>
<svg style="left:18px;top:1041px" width="26" height="27" viewBox="0 0 26 27"><defs><linearGradient id="mg" x1="0" y1="0" x2="0" y2="1"><stop offset="0" stop-color="#ffc83d"/><stop offset="1" stop-color="#f0931e"/></linearGradient><mask id="mm"><rect width="26" height="27" fill="#fff"/><circle cx="9" cy="9" r="9.5" fill="#000"/></mask></defs><circle cx="14" cy="15" r="11" fill="url(#mg)" mask="url(#mm)"/><path d="M1.5 11 Q1.5 8 4.5 8 Q5.5 4 9.5 4.5 Q13 5 13.5 8.5 Q16 9 15.5 11 Z" fill="#b3cff5"/></svg>
<div class="abs" style="left:50px;top:1041px;font-size:12px;color:#fff;white-space:nowrap;-webkit-text-stroke:0.3px #fff">74°F</div>
<div class="abs" style="left:50px;top:1057px;font-size:12.5px;color:#d0d0d0;white-space:nowrap">Mostly clear</div>
<svg style="left:484px;top:1044px" width="24" height="24" viewBox="0 0 24 24"><defs><linearGradient id="wg" x1="0" y1="0" x2="1" y2="1"><stop offset="0" stop-color="#6fd3ff"/><stop offset="1" stop-color="#1b9de2"/></linearGradient></defs><rect x="0" y="0" width="11.3" height="11.3" rx="1" fill="url(#wg)"/><rect x="12.7" y="0" width="11.3" height="11.3" rx="1" fill="url(#wg)"/><rect x="0" y="12.7" width="11.3" height="11.3" rx="1" fill="url(#wg)"/><rect x="12.7" y="12.7" width="11.3" height="11.3" rx="1" fill="url(#wg)"/></svg>
<div class="abs" style="left:521px;top:1040px;width:220px;height:32px;border-radius:16px;background:linear-gradient(90deg,#3a3a3a,#333 60%,#2e2e2e);border:1px solid #474747"></div>
<svg style="left:532px;top:1049px" width="15" height="15" viewBox="0 0 15 15"><circle cx="6" cy="6" r="4.8" stroke="#e0e0e0" stroke-width="1.5" fill="none"/><path d="M9.5 9.5 L14 14" stroke="#e0e0e0" stroke-width="1.6"/></svg>
<div class="abs" style="left:558px;top:1048px;font-size:13.6px;color:#d8d8d8;white-space:nowrap">Search</div>
<svg style="left:690px;top:1042px" width="46" height="28" viewBox="0 0 46 28"><circle cx="23" cy="11" r="11" fill="#f6d27a"/><circle cx="19" cy="8" r="2" fill="#e2b65a"/><circle cx="26" cy="14" r="1.5" fill="#e2b65a"/><path d="M0 24 L4 18 L6 21 L9 15 L12 21 L15 17 L18 23 L28 23 L31 17 L34 21 L37 16 L40 21 L44 19 L46 24 Q23 30 0 24Z" fill="#3a5bc7"/><path d="M2 25 Q23 20 44 24 Q23 29 2 25Z" fill="#e8eefc"/></svg>
<div class="abs" style="left:753px;top:1053px;width:17px;height:14px;border-radius:2px;background:#6e6e6e"></div>
<div class="abs" style="left:758px;top:1045px;width:19px;height:16px;border-radius:2px;background:#e8e8e8"></div>
<svg style="left:796px;top:1044px" width="24" height="24" viewBox="0 0 24 24"><defs><linearGradient id="tg" x1="0" y1="0" x2="1" y2="1"><stop offset="0" stop-color="#7b83eb"/><stop offset="1" stop-color="#5b3fc4"/></linearGradient></defs><path d="M12 0.5 A11.5 11.5 0 1 1 4 20 L1.5 23 L2.5 17.5 A11.5 11.5 0 0 1 12 0.5Z" fill="url(#tg)"/><rect x="6" y="8" width="9" height="8" rx="1.5" fill="#fff"/><path d="M15 10.5 L18.5 8.5 V15.5 L15 13.5Z" fill="#fff"/></svg>
<svg style="left:840px;top:1044px" width="26" height="22" viewBox="0 0 26 22"><path d="M0 2 Q0 0 2 0 H9 L11 2 H24 Q26 2 26 4 V20 Q26 22 24 22 H2 Q0 22 0 20Z" fill="#f0b83a"/><path d="M0 6 H26 V20 Q26 22 24 22 H2 Q0 22 0 20Z" fill="#ffd65c"/><rect x="7" y="13" width="12" height="6" rx="1" fill="#1f7ad8"/></svg>
<div class="abs" style="left:850px;top:1072px;width:7px;height:3px;border-radius:2px;background:#9a9a9a"></div>
<svg style="left:884px;top:1044px" width="24" height="24" viewBox="0 0 24 24"><defs><linearGradient id="eg" x1="0" y1="0" x2="1" y2="1"><stop offset="0" stop-color="#35c1f1"/><stop offset="0.5" stop-color="#1fa0e4"/><stop offset="1" stop-color="#0c59a4"/></linearGradient></defs><circle cx="12" cy="12" r="11.5" fill="url(#eg)"/><path d="M23 12 A11 11 0 0 0 2 8 Q6 3 13 4 Q20 5.5 20 11 Q20 14 16 14 H10 Q10 19 16 19.5 Q20 19.5 22 17 Q23.5 14.5 23 12Z" fill="#5ad45a"/><path d="M10 14 Q9 9 14 9 Q11 8 8 11 Q6 15 9 19 Q12 22 16 21 Q10 19 10 14Z" fill="#0a4d8f"/></svg>
<svg style="left:929px;top:1044px" width="24" height="24" viewBox="0 0 24 24"><defs><radialGradient id="fg" cx="0.7" cy="0.2" r="1"><stop offset="0" stop-color="#ffdd3a"/><stop offset="0.45" stop-color="#ff7a1a"/><stop offset="1" stop-color="#e3215e"/></radialGradient></defs><circle cx="12" cy="13" r="11" fill="url(#fg)"/><circle cx="12" cy="13" r="6" fill="#7a3fd6"/><path d="M6 8 Q10 4 15 6 Q12 8 13 10 Q9 9 6 8Z" fill="#ffb13a"/></svg>
<svg style="left:973px;top:1044px" width="24" height="24" viewBox="0 0 24 24"><circle cx="12" cy="12" r="11.5" fill="#ea4335"/><path d="M12 12 L22 6.2 A11.5 11.5 0 0 1 12 23.5Z" fill="#fbbc04"/><path d="M12 12 L12 23.5 A11.5 11.5 0 0 1 2 6.2Z" fill="#34a853"/><path d="M12 12 L2 6.2 A11.5 11.5 0 0 1 22 6.2Z" fill="#ea4335"/><circle cx="12" cy="12" r="5.5" fill="#fff"/><circle cx="12" cy="12" r="4.3" fill="#1a73e8"/></svg>
<div class="abs" style="left:987px;top:1039px;width:15px;height:15px;border-radius:8px;background:#d9cfc5;border:1px solid #bbb"></div><div class="abs" style="left:991px;top:1041px;width:7px;height:8px;border-radius:3px;background:#3a2a22"></div>
<div class="abs" style="left:982px;top:1072px;width:7px;height:3px;border-radius:2px;background:#9a9a9a"></div>
<svg style="left:1016px;top:1044px" width="24" height="24" viewBox="0 0 24 24"><circle cx="12" cy="12" r="11.5" fill="#ea4335"/><path d="M12 12 L22 6.2 A11.5 11.5 0 0 1 12 23.5Z" fill="#fbbc04"/><path d="M12 12 L12 23.5 A11.5 11.5 0 0 1 2 6.2Z" fill="#34a853"/><path d="M12 12 L2 6.2 A11.5 11.5 0 0 1 22 6.2Z" fill="#ea4335"/><circle cx="12" cy="12" r="5.5" fill="#fff"/><circle cx="12" cy="12" r="4.3" fill="#1a73e8"/></svg>
<div class="abs" style="left:1031px;top:1042px;width:11px;height:11px;border-radius:3px;background:#333;border:1px solid #777"></div>
<div class="abs" style="left:1053px;top:1036px;width:39px;height:39px;border-radius:5px;background:#5e3a3d"></div>
<svg style="left:1061px;top:1044px" width="24" height="24" viewBox="0 0 24 24"><circle cx="12" cy="12" r="11.5" fill="#ea4335"/><path d="M12 12 L22 6.2 A11.5 11.5 0 0 1 12 23.5Z" fill="#fbbc04"/><path d="M12 12 L12 23.5 A11.5 11.5 0 0 1 2 6.2Z" fill="#34a853"/><path d="M12 12 L2 6.2 A11.5 11.5 0 0 1 22 6.2Z" fill="#ea4335"/><circle cx="12" cy="12" r="5.5" fill="#fff"/><circle cx="12" cy="12" r="4.3" fill="#1a73e8"/></svg>
<div class="abs" style="left:1076px;top:1039px;width:15px;height:15px;border-radius:8px;background:#c2185b"></div><div class="abs" style="left:1076px;top:1040px;width:15px;text-align:center;font-size:9px;color:#fff">S</div>
<div class="abs" style="left:1065px;top:1072px;width:16px;height:3px;border-radius:2px;background:#ff8fa0"></div>
<div class="abs" style="left:1105px;top:1047px;width:24px;height:18px;background:#9fc8ea;border:1px solid #d9e6f2"></div>
<svg style="left:1106px;top:1049px" width="22" height="15"><path d="M0 12 L4 9 L7 11 L10 3 L13 10 L16 7 L19 11 L22 9 V15 H0Z" fill="#3f8fd2"/></svg>
<div class="abs" style="left:1148px;top:1046px;width:24px;height:19px;background:#0c0c0c;border:1px solid #9a9a9a"></div>
<div class="abs" style="left:1151px;top:1049px;font-size:6px;color:#fff;font-family:'Liberation Mono',monospace">C:\_</div>
<svg style="left:1192px;top:1043px" width="24" height="26" viewBox="0 0 24 26"><path d="M4 4 Q8 0 12 2 Q16 0 20 3 Q23 7 21 12 Q19 17 17 16 Q16 22 13 24 Q11 24 11 19 Q8 19 6 15 Q2 12 3 7Z" fill="#336791" stroke="#fff" stroke-width="1.3"/></svg>
<svg style="left:1237px;top:1044px" width="24" height="24" viewBox="0 0 24 24"><path d="M17.5 0.5 L23.5 3.5 V20.5 L17.5 23.5 L7 14 L2.5 17.5 L0.5 16.5 V7.5 L2.5 6.5 L7 10Z M17.5 6.5 L11 12 L17.5 17.5Z" fill="#2a9bea"/></svg>
<div class="abs" style="left:1246px;top:1072px;width:7px;height:3px;border-radius:2px;background:#9a9a9a"></div>
<div class="abs" style="left:1280px;top:1044px;width:25px;height:25px;background:linear-gradient(135deg,#21d789,#fcf84a 60%,#07c3f2)"></div><div class="abs" style="left:1284px;top:1048px;width:17px;height:17px;background:#000"></div><div class="abs" style="left:1286px;top:1048px;font-size:8px;font-weight:bold;color:#fff">PC</div><div class="abs" style="left:1286px;top:1061px;width:6px;height:1.5px;background:#fff"></div>
<svg style="left:1325px;top:1044px" width="24" height="24" viewBox="0 0 24 24"><path d="M12 0 L24 12 L12 24 L0 12Z" fill="#f05033"/><path d="M0 12 L6 6 L12 12 L6 18Z" fill="#4aa0e8"/><path d="M12 12 L18 6 L24 12 L18 18Z" fill="#7bc043"/><path d="M6 18 L12 12 L18 18 L12 24Z" fill="#f2c53d"/><circle cx="12" cy="8" r="2" fill="#222"/><circle cx="12" cy="16" r="2" fill="#222"/><path d="M12 8 V16" stroke="#222" stroke-width="1.5"/></svg>
<div class="abs" style="left:1369px;top:1044px;width:24px;height:24px;background:#fff"></div><div class="abs" style="left:1373px;top:1047px;width:16px;height:11px;border:1.5px solid #1769c2;border-radius:2px"></div><div class="abs" style="left:1371px;top:1061px;width:20px;font-size:4px;color:#444;text-align:center">TaskPro</div>
<div class="abs" style="left:1378px;top:1072px;width:7px;height:3px;border-radius:2px;background:#9a9a9a"></div>
<svg style="left:1415px;top:1043px" width="20" height="25" viewBox="0 0 20 25"><path d="M2 0 H14 L20 6 V23 Q20 25 18 25 H2 Q0 25 0 23 V2 Q0 0 2 0Z" fill="#1e88e5"/><path d="M14 0 L20 6 H14Z" fill="#90caf9"/><path d="M4 10 H16 M4 14 H16 M4 18 H12" stroke="#fff" stroke-width="1.6"/></svg>
<div class="abs" style="left:1422px;top:1072px;width:7px;height:3px;border-radius:2px;background:#9a9a9a"></div>
<svg style="left:1671px;top:1052px" width="12" height="8"><path d="M1 7 L6 2 L11 7" stroke="#fff" stroke-width="1.4" fill="none"/></svg>
<svg style="left:1700px;top:1049px" width="18" height="12" viewBox="0 0 18 12"><path d="M4 12 Q0 12 0 8.5 Q0 5.5 3 5 Q4 1 8.5 1 Q12.5 1 13.5 4.5 Q18 4.5 18 8.5 Q18 12 14.5 12Z" fill="#d0d0d0"/><path d="M6 12 L11 5 L14 12" fill="#9a9a9a"/></svg>
<div class="abs" style="left:1733px;top:1050px;width:16px;height:12px;border:1.3px solid #fff;border-radius:2px"></div>
<svg style="left:1735px;top:1052px" width="12" height="8"><path d="M1 1.5 H11 M1 4 H11 M3 6.5 H9" stroke="#fff" stroke-width="1" stroke-dasharray="1.2 1"/></svg>
<svg style="left:1764px;top:1049px" width="17" height="13" viewBox="0 0 17 13"><path d="M1 5 Q8.5 -1.5 16 5 M3.5 7.5 Q8.5 3 13.5 7.5 M6 10 Q8.5 8 11 10" stroke="#fff" stroke-width="1.4" fill="none"/><circle cx="8.5" cy="12" r="1.2" fill="#fff"/></svg>
<svg style="left:1788px;top:1048px" width="18" height="15" viewBox="0 0 18 15"><path d="M1 5 H4 L8.5 1.5 V13.5 L4 10 H1Z" stroke="#fff" stroke-width="1.2" fill="none" stroke-linejoin="round"/><path d="M11 5 Q12.5 7.5 11 10 M13 3.5 Q15.5 7.5 13 11.5 M15 2 Q18.5 7.5 15 13" stroke="#fff" stroke-width="1.2" fill="none"/></svg>
<div class="abs" style="left:1776px;top:1041px;width:100px;text-align:right;font-size:12px;color:#fff;white-space:nowrap">5:53 PM</div>
<div class="abs" style="left:1776px;top:1057.5px;width:100px;text-align:right;font-size:12px;color:#fff;white-space:nowrap">12/4/2025</div>
<svg style="left:1884px;top:1048px" width="16" height="16" viewBox="0 0 16 16"><path d="M8 1 Q13 1 13 6.5 V10.5 L15 12.5 H1 L3 10.5 V6.5 Q3 1 8 1Z" fill="#8ee0ff"/><path d="M6 13.5 Q8 16 10 13.5Z" fill="#8ee0ff"/></svg>
</body></html>
